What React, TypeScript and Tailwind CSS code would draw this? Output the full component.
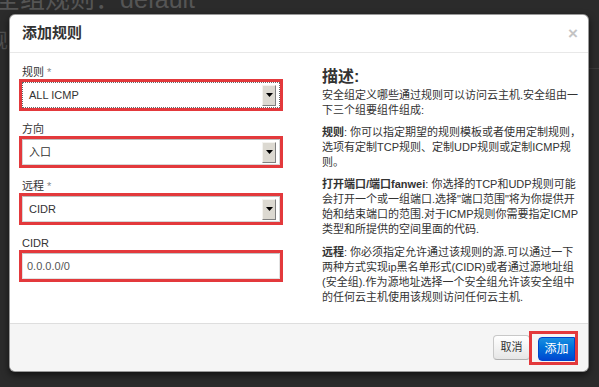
import { ReactNode } from 'react';

const font = "font-['Liberation_Sans','Noto_Sans_CJK_SC',sans-serif]";

function RedBox({ children }: { children: ReactNode }) {
  return <div className="h-[32px] w-[264px] border-[3px] border-[#e3393c]">{children}</div>;
}

function FakeSelect({ value, focused }: { value: string; focused?: boolean }) {
  return (
    <div
      className={`flex h-full items-center justify-between border bg-white pl-[6px] pr-[3px] text-[11px] text-[#333] ${
        focused ? 'border-dotted border-[#666]' : 'border-[#d6d6d6] border-t-[#bdbdbd]'
      }`}
    >
      <span>{value}</span>
      {/* 旧式下拉按钮 */}
      <div className="flex h-[21px] w-[14px] items-center justify-center border border-t-[#f4f3ef] border-l-[#f4f3ef] border-b-[#7f7f7f] border-r-[#7f7f7f] bg-[#dcd9d1]">
        <svg width="7" height="4" viewBox="0 0 7 4">
          <path d="M0 0h7L3.5 4z" fill="#000" />
        </svg>
      </div>
    </div>
  );
}

function Field({ label, required, children, first }: { label: string; required?: boolean; children: ReactNode; first?: boolean }) {
  return (
    <div className={first ? '' : 'mt-[11px]'}>
      <div className="ml-[3px] h-[14px] text-[11px] leading-[14px] text-[#333]">
        {label}
        {required && <span className="ml-[3px] text-[#888]">*</span>}
      </div>
      <RedBox>{children}</RedBox>
    </div>
  );
}

export default function App() {
  return (
    <div className={`relative h-[387px] w-[599px] overflow-hidden bg-[#2b2b2b] ${font}`}>
      {/* 背景页面（被遮罩） */}
      <div className="ml-[-30px] mt-[-15px] whitespace-nowrap text-[25px] leading-[28px] text-[#555]">
        安全组规则：default
      </div>
      <div className="ml-[-12px] mt-[17px] text-[20px] leading-[22px] text-[#505050]">规则</div>
      <div className="absolute left-[589px] right-0 top-[68px] h-[1px] bg-[#3a3a3a]" />

      {/* 弹窗 */}
      <div className="absolute left-[9px] top-[14px] flex h-[358px] w-[580px] flex-col rounded-[6px] border border-black/40 bg-white shadow-[0_3px_7px_rgba(0,0,0,0.6)]">
        <div className="flex h-[38px] items-center justify-between border-b border-[#e8e8e8] pl-[12px] pr-[10px]">
          <h3 className="text-[15px] font-bold text-[#333]">添加规则</h3>
          <span className="text-[17px] font-bold leading-none text-[#c4c4c4]">×</span>
        </div>

        <div className="flex flex-1 pl-[9px]">
          <div className="w-[264px] pt-[12px]">
            <Field label="规则" required first>
              <FakeSelect value="ALL ICMP" focused />
            </Field>
            <Field label="方向">
              <FakeSelect value="入口" />
            </Field>
            <Field label="远程" required>
              <FakeSelect value="CIDR" />
            </Field>
            <Field label="CIDR">
              <div className="flex h-full items-center border border-[#e2e2e2] border-t-[#c4c4c4] bg-white pl-[4px] text-[11px] text-[#555]">
                0.0.0.0/0
              </div>
            </Field>
          </div>

          <div className="ml-[39px] w-[256px] pt-[14px] text-[11px] leading-[15px] text-[#333] whitespace-nowrap">
            <h3 className="mb-[1px] text-[16px] font-bold leading-[20px]">描述:</h3>
            <p className="mb-[7px]">
              安全组定义哪些通过规则可以访问云主机.安全组由一
              <br />
              下三个组要组件组成:
            </p>
            <p className="mb-[7px]">
              <b>规则</b>: 你可以指定期望的规则模板或者使用定制规则，
              <br />
              选项有定制TCP规则、定制UDP规则或定制ICMP规
              <br />
              则。
            </p>
            <p className="mb-[8px]">
              <b>打开端口/端口fanwei</b>: 你选择的TCP和UDP规则可能
              <br />
              会打开一个或一组端口.选择"端口范围"将为你提供开
              <br />
              始和结束端口的范围.对于ICMP规则你需要指定ICMP
              <br />
              类型和所提供的空间里面的代码.
            </p>
            <p>
              <b>远程</b>: 你必须指定允许通过该规则的源.可以通过一下
              <br />
              两种方式实现ip黑名单形式(CIDR)或者通过源地址组
              <br />
              (安全组).作为源地址选择一个安全组允许该安全组中
              <br />
              的任何云主机使用该规则访问任何云主机.
            </p>
          </div>
        </div>

        <div className="flex h-[48px] items-center justify-end rounded-b-[6px] border-t border-[#dedede] bg-[#f5f5f5] pr-[10px]">
          <button className="h-[25px] w-[37px] rounded-[4px] border border-[#c8c8c8] border-b-[#b0b0b0] bg-gradient-to-b from-white to-[#e6e6e6] text-[11px] text-[#333]">
            取消
          </button>
          <div className="ml-[-1px] border-[3px] border-[#e3393c] pb-[1px] pl-[6px] pt-[3px]">
            <button className="block h-[24px] w-[37px] rounded-l-[4px] border border-[#0044cc] bg-gradient-to-b from-[#1a8fe0] to-[#0046d0] text-[12px] text-white">
              添加
            </button>
          </div>
        </div>
      </div>
    </div>
  );
}
